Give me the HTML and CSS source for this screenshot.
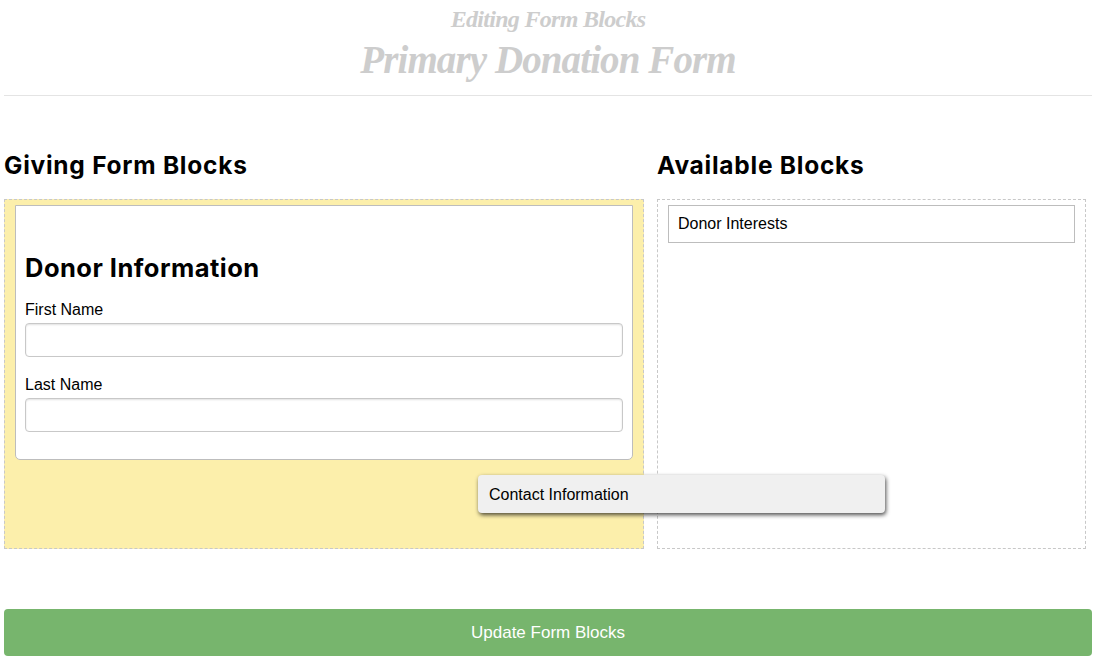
FILE: index.html
```html
<!DOCTYPE html>
<html lang="en">
<head>
    <meta charset="UTF-8">
    <meta name="viewport" content="width=device-width, initial-scale=1.0">
    <title>Editing Form Blocks</title>
    <link rel="stylesheet" href="styles.css">
</head>
<body>
    <header class="page-header">
        <h3>Editing Form Blocks</h3>
        <h1>Primary Donation Form</h1>
    </header>

    <div class="columns">
        <section>
            <h2>Giving Form Blocks</h2>
            <div class="drop-zone drop-zone-active">
                <div class="block block-open">
                    <h2 class="block-title">Donor Information</h2>
                    <label for="first-name">First Name</label>
                    <input type="text" id="first-name">
                    <label for="last-name">Last Name</label>
                    <input type="text" id="last-name">
                </div>
            </div>
        </section>
        <section>
            <h2>Available Blocks</h2>
            <div class="drop-zone">
                <div class="block">Donor Interests</div>
            </div>
        </section>
    </div>

    <button class="submit-button" type="button">Update Form Blocks</button>

    <!-- Block being dragged -->
    <div class="block-dragging">Contact Information</div>
</body>
</html>
```

FILE: styles.css
```css
body {
    font-family: "Liberation Sans", Arial, sans-serif;
    font-size: 16px;
    margin: 0;
    padding: 0 5px 0 4px;
    background-color: #fff;
    color: #000;
    position: relative;
}
.page-header {
    height: 95px;
    border-bottom: 1px solid #e4e4e4;
    text-align: center;
    color: #cdcdcd;
    font-family: "Liberation Serif", serif;
    font-style: italic;
    font-weight: bold;
}
.page-header h3 {
    margin: 0;
    padding-top: 6px;
    font-size: 24px;
    line-height: 26px;
    letter-spacing: -0.7px;
}
.page-header h1 {
    margin: 0;
    padding-top: 3px;
    font-size: 39px;
    line-height: 50px;
    letter-spacing: -0.9px;
}
.columns {
    display: grid;
    grid-template-columns: 640px 429px;
    column-gap: 13px;
    padding-top: 54px;
}
h2 {
    font-family: Inter, "Noto Sans", sans-serif;
    font-size: 24.5px;
    font-weight: 700;
    line-height: 30px;
    letter-spacing: 0.75px;
    margin: 0 0 19px;
}
.drop-zone {
    box-sizing: border-box;
    height: 350px;
    border: 1px dashed #c8c8c8;
    padding: 5px 10px;
}
.drop-zone-active {
    background-color: #fcefab;
}
.block {
    box-sizing: border-box;
    height: 38px;
    border: 1px solid #bdbdbd;
    background-color: #fff;
    padding: 0 9px;
    line-height: 35px;
}
.block-open {
    height: 255px;
    border-radius: 0 0 5px 5px;
    line-height: normal;
}
.block-title {
    font-size: 25.5px;
    line-height: 32px;
    letter-spacing: 0.47px;
    margin: 46px 0 17px;
}
label {
    display: block;
    line-height: 18px;
    margin-bottom: 4px;
}
input {
    display: block;
    box-sizing: border-box;
    width: 100%;
    height: 34px;
    margin: 0 0 19px;
    border: 1px solid #c8c8c8;
    border-radius: 4px;
    box-shadow: inset 0 1px 2px rgba(0,0,0,0.12);
    background-color: #fff;
}
.block-dragging {
    position: absolute;
    left: 478px;
    top: 475px;
    box-sizing: border-box;
    width: 407px;
    height: 38px;
    padding: 0 11px;
    line-height: 39px;
    border-radius: 4px;
    background-color: #f0f0f0;
    box-shadow: 1px 2px 4px rgba(0,0,0,0.7);
}
.submit-button {
    display: block;
    width: 100%;
    height: 47px;
    margin-top: 60px;
    border: 0;
    border-radius: 4px;
    background-color: #77b56d;
    color: #fff;
    font-family: "Liberation Sans", Arial, sans-serif;
    font-size: 17px;
}
```
